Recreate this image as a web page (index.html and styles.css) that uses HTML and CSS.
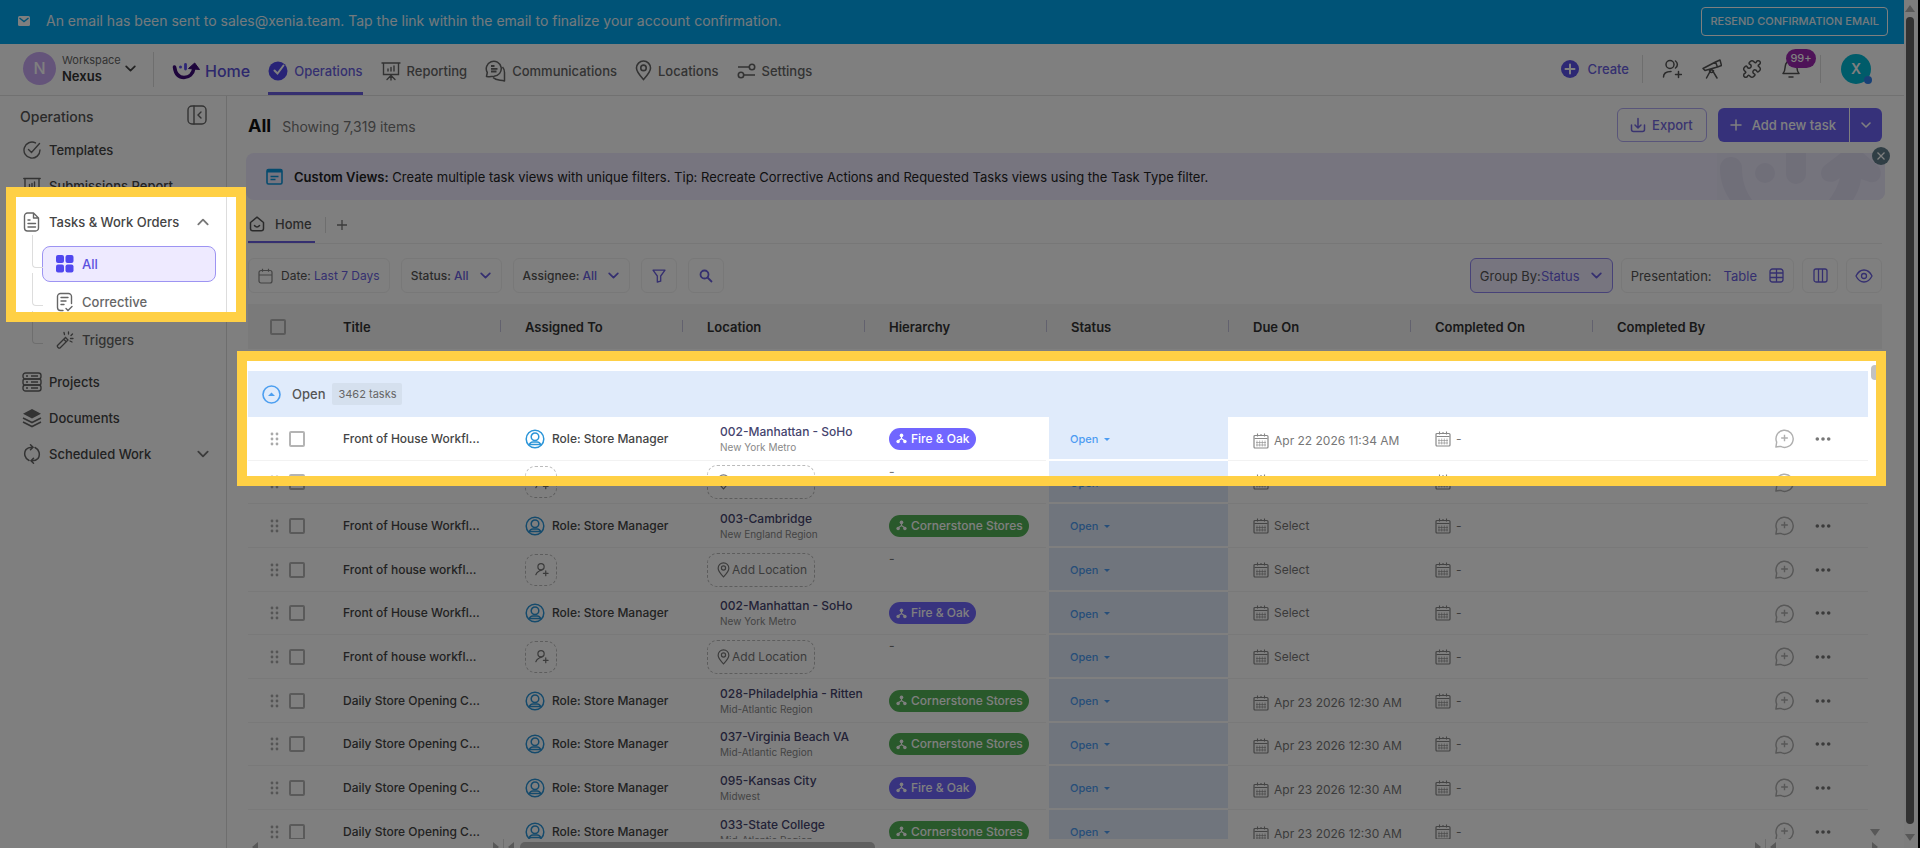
FILE: index.html
```html
<!DOCTYPE html>
<html lang="en">
<head>
<meta charset="utf-8">
<title>Operations - Tasks &amp; Work Orders</title>
<link rel="stylesheet" href="styles.css">
</head>
<body>
<svg class="defs" aria-hidden="true">
  <symbol id="chev" viewBox="0 0 12 12"><path d="M2 4l4 4 4-4" fill="none" stroke="currentColor" stroke-width="1.6" stroke-linecap="round" stroke-linejoin="round"/></symbol>
  <symbol id="drag" viewBox="0 0 10 16"><g fill="currentColor"><circle cx="2" cy="3" r="1.4"/><circle cx="7" cy="3" r="1.4"/><circle cx="2" cy="8" r="1.4"/><circle cx="7" cy="8" r="1.4"/><circle cx="2" cy="13" r="1.4"/><circle cx="7" cy="13" r="1.4"/></g></symbol>
  <symbol id="role" viewBox="0 0 20 20"><g fill="none" stroke="currentColor" stroke-width="1.5"><circle cx="10" cy="10" r="8.8"/><circle cx="10" cy="7.8" r="3.8"/><path d="M4.2 16c.6-2 2-3 3.6-3h4.4c1.6 0 3 1 3.6 3M4.6 15.6h10.8"/></g></symbol>
  <symbol id="adduser" viewBox="0 0 18 18"><g fill="none" stroke="currentColor" stroke-width="1.3" stroke-linecap="round"><circle cx="8.500" cy="6" r="3.300"/><path d="M10.500 8.500c-1 1.800-2.500 1-4 2.200-1.300 1-2.500 1.500-3.500 3.800M13.500 10.500v5M11 13h5"/></g></symbol>
  <symbol id="pin" viewBox="0 0 16 20"><g fill="none" stroke="currentColor" stroke-width="1.5"><path d="M8 18.6C4.4 14.600 1.300 11.400 1.300 7.700a6.700 6.700 0 0 1 13.400 0c0 3.700-3.100 6.900-6.700 10.900z"/><circle cx="8" cy="7.500" r="2.600"/></g></symbol>
  <symbol id="org" viewBox="0 0 12 12"><g fill="currentColor"><circle cx="6" cy="2.600" r="2"/><circle cx="2.300" cy="9.300" r="1.900"/><circle cx="9.700" cy="9.300" r="1.900"/><path d="M5.400 4h1.200v1.600l3 2-.8 1L6 6.700 3.200 8.600l-.8-1 3-2z"/></g></symbol>
  <symbol id="cal" viewBox="0 0 16 16"><g fill="none" stroke="currentColor"><rect x="1" y="2.500" width="14" height="12.500" rx="1" stroke-width="1.200"/><path d="M1.500 5.500h13M4.500.5v3M11.500.5v3M8 1v2" stroke-width="1.100"/><path d="M4 7.500v6M6.700 7.500v6M9.300 7.500v6M12 7.500v6M3 9.500h10M3 12h10" stroke-width=".6"/></g></symbol>
  <symbol id="chat" viewBox="0 0 22 22"><g fill="none" stroke="currentColor" stroke-width="1.500" stroke-linejoin="round"><path d="M2 20l.8-5.200A9 9 0 1 1 7 19.300c-1.600.2-3.200.3-5 .7z"/><path d="M11 7v7M7.500 10.500h7"/></g></symbol>
  <symbol id="dots" viewBox="0 0 16 6"><g fill="currentColor"><circle cx="2.300" cy="3" r="1.800"/><circle cx="8" cy="3" r="1.800"/><circle cx="13.700" cy="3" r="1.800"/></g></symbol>
  <symbol id="report" viewBox="0 0 20 20"><g fill="none" stroke="currentColor" stroke-width="1.400" stroke-linecap="round"><path d="M1 2h18M2.500 2v11.500h15V2M7 10V8M10 10V6.500M13 10V5M10 13.500V19M6 18.500l4-4 4 4"/></g></symbol>
</svg>

<div class="app">
  <div class="notice">
    <svg width="14" height="12" viewBox="0 0 14 12" aria-hidden="true"><rect x="1" y="1" width="12" height="10" rx="1.500" fill="#fff"/><path d="M2.500 3l4.500 3.500L11.500 3" fill="none" stroke="#00a7ee" stroke-width="1.400"/></svg>
    <p>An email has been sent to sales@xenia.team. Tap the link within the email to finalize your account confirmation.</p>
    <button class="resend">RESEND CONFIRMATION EMAIL</button>
  </div>

  <header class="top">
    <button class="workspace">
      <span class="ws-avatar">N</span>
      <span class="ws-text"><span>Workspace</span><b>Nexus</b></span>
      <svg width="13" height="13"><use href="#chev"/></svg>
    </button>
    <nav class="nav">
      <a class="home" href="#"><svg width="28" height="20" viewBox="0 0 28 20"><g fill="none" stroke="#3c0a78" stroke-width="3.600" stroke-linecap="round"><path d="M2.500 6c1 7.500 4.500 10.500 9.500 10.500s9-3.500 10-9.500"/></g><path d="M16.500 7.500l6.200-5.500L27.500 8.500z" fill="#3c0a78" stroke="#3c0a78" stroke-width="1" stroke-linejoin="round"/><circle cx="8.500" cy="6" r="1.500" fill="#5b4df0"/><path d="M13.500 3.500v4.500" stroke="#5b4df0" stroke-width="2.800" stroke-linecap="round"/></svg>Home</a>
      <a class="on" href="#"><svg width="20" height="20" viewBox="0 0 20 20"><circle cx="10" cy="10" r="9.500" fill="#5047ef"/><path d="M6.500 9.500l3 3 6-8" fill="none" stroke="#fff" stroke-width="2" stroke-linecap="round"/></svg>Operations</a>
      <a href="#"><svg width="20" height="20"><use href="#report"/></svg>Reporting</a>
      <a href="#"><svg width="21" height="22" viewBox="0 0 21 22"><g fill="none" stroke="currentColor" stroke-width="1.500" stroke-linejoin="round"><path d="M1.500 16.500l.8-4A7.500 7.500 0 1 1 9 16.200c-2.500 0-5 .8-7.500.3z"/><path d="M17.500 7c1.400 1.500 2 3.500 2 5.500v8.500c-4-1.500-8 0-11.500-3.500"/><path d="M6 6h3.500M6 8.800h6.500M6 11.500h5.500" stroke-width="1.800"/></g></svg>Communications</a>
      <a href="#"><svg width="17" height="21"><use href="#pin"/></svg>Locations</a>
      <a href="#"><svg width="19" height="16" viewBox="0 0 19 16"><g fill="none" stroke="currentColor" stroke-width="1.600"><path d="M1 4h11M7 12h11"/><circle cx="15" cy="4" r="2.700"/><circle cx="4" cy="12" r="2.700"/></g></svg>Settings</a>
    </nav>
    <div class="tools">
      <button class="create"><svg width="18" height="18" viewBox="0 0 18 18"><circle cx="9" cy="9" r="9" fill="#5b50e8"/><path d="M9 4.500v9M4.500 9h9" stroke="#fff" stroke-width="2" stroke-linecap="round"/></svg>Create</button>
      <span class="vline"></span>
      <button aria-label="Invite user"><svg width="20" height="20" viewBox="0 0 20 20"><g fill="none" stroke="currentColor" stroke-width="1.500" stroke-linecap="round"><circle cx="8" cy="5.500" r="4"/><path d="M13.500 2c2.500 2 2.500 5 0 7M1.500 18c0-3.500 2-5.500 7.500-5.500M16.500 12.500v6M13.500 15.500h6"/></g></svg></button>
      <button aria-label="Explore"><svg width="20" height="20" viewBox="0 0 20 20"><g fill="none" stroke="currentColor" stroke-width="1.500" stroke-linejoin="round" stroke-linecap="round"><path d="M1 9.500L13.500 3l2 5L3 11.500zM13.500 3L18 1l1.500 5.500-4 1.500M9.500 9.800L4.500 19M9.500 9.800L15 19M7.500 11.500a2 2 0 0 0 4 0"/></g></svg></button>
      <button aria-label="Integrations"><svg width="20" height="20" viewBox="0 0 24 24"><path d="M19.439 7.850c-.049.322.059.648.289.878l1.568 1.568c.47.470.706 1.087.706 1.704s-.235 1.233-.706 1.704l-1.611 1.611a.98.980 0 0 1-.837.276c-.470-.070-.802-.480-.968-.925a2.501 2.501 0 1 0-3.214 3.214c.446.166.855.497.925.968a.979.979 0 0 1-.276.837l-1.610 1.610a2.404 2.404 0 0 1-1.705.707 2.402 2.402 0 0 1-1.704-.706l-1.568-1.568a1.026 1.026 0 0 0-.877-.290c-.493.074-.840.504-1.020.968a2.500 2.500 0 1 1-3.237-3.237c.464-.180.894-.527.967-1.020a1.026 1.026 0 0 0-.289-.877l-1.568-1.568A2.402 2.402 0 0 1 1.998 12c0-.617.236-1.234.706-1.704L4.230 8.770c.240-.240.581-.353.917-.303.515.077.877.528 1.073 1.010a2.500 2.500 0 1 0 3.259-3.259c-.482-.196-.933-.558-1.010-1.073-.050-.336.062-.676.303-.917l1.525-1.525A2.402 2.402 0 0 1 12 1.998c.617 0 1.234.236 1.704.706l1.568 1.568c.230.230.556.338.877.290.493-.074.840-.504 1.020-.968a2.500 2.500 0 1 1 3.237 3.237c-.464.180-.894.527-.967 1.020Z" fill="none" stroke="currentColor" stroke-width="1.800" stroke-linejoin="round"/></svg></button>
      <button class="bell" aria-label="Notifications"><svg width="18" height="20" viewBox="0 0 18 20"><path d="M1 14.500c2-2 2-4 2.200-7C3.500 4 5.500 2 9 2s5.500 2 5.800 5.500c.2 3 .2 5 2.200 7zM7 18h4" fill="none" stroke="currentColor" stroke-width="1.500" stroke-linejoin="round" stroke-linecap="round"/></svg><span class="badge">99+</span></button>
      <span class="vline last"></span>
      <button class="me" aria-label="Account">X<span class="dot"></span></button>
    </div>
  </header>

  <div class="body">
    <aside class="side">
      <div class="side-head"><h2>Operations</h2><button aria-label="Collapse"><svg width="20" height="20" viewBox="0 0 20 20"><g fill="none" stroke="currentColor" stroke-width="1.400" stroke-linecap="round"><rect x="1" y="1" width="18" height="18" rx="4"/><path d="M7 1v18M14 7l-3 3 3 3"/></g></svg></button></div>
      <a href="#"><svg width="18" height="18" viewBox="0 0 18 18"><g fill="none" stroke="currentColor" stroke-width="1.400" stroke-linecap="round"><path d="M12.500 1.900A8 8 0 1 0 17 9M5.500 8.500l3 3 8-9"/></g></svg>Templates</a>
      <a href="#"><svg width="18" height="18" viewBox="0 0 18 18"><g fill="none" stroke="currentColor" stroke-width="1.400" stroke-linecap="round"><path d="M.8 1.500h16.400M2 1.500v11h14v-11M6.500 9.500v-2M9 9.500V6.500M11.500 9.500V5M9 12.500V17"/></g></svg>Submissions Report</a>
      <a href="#"><svg width="18" height="20" viewBox="0 0 18 20"><g fill="none" stroke="currentColor" stroke-width="1.400" stroke-linejoin="round" stroke-linecap="round"><path d="M10.500 1H4.500a3 3 0 0 0-3 3v12a3 3 0 0 0 3 3h8a3 3 0 0 0 3-3V6zM10.500 1v5h5M5 8h2M5 11.500h7.500M5 15h7.500"/></g></svg>Tasks &amp; Work Orders<svg class="end up" width="14" height="14"><use href="#chev"/></svg></a>
      <div class="tree">
        <a class="sel" href="#"><svg width="18" height="18" viewBox="0 0 18 18"><g fill="#5047ef"><rect x="0" y="0" width="8" height="8" rx="2"/><rect x="9.500" y="0" width="8" height="8" rx="2"/><rect x="0" y="9.500" width="8" height="8" rx="2"/><rect x="9.500" y="9.500" width="8" height="8" rx="2"/></g></svg>All</a>
        <a href="#"><svg width="18" height="20" viewBox="0 0 18 20"><g fill="none" stroke="currentColor" stroke-width="1.400" stroke-linecap="round"><path d="M7 18.500H4.500a3 3 0 0 1-3-3v-11a3 3 0 0 1 3-3h8a3 3 0 0 1 3 3v7M5 5.500h7M5 9h5M5 12.500h3M10 16.500l2 2 4-4"/></g></svg>Corrective</a>
        <a href="#"><svg width="18" height="18" viewBox="0 0 18 18"><g fill="none" stroke="currentColor" stroke-width="1.300" stroke-linecap="round"><path d="M1.500 14.500l8-8 2.500 2.500-8 8c-1 .8-3.300-1.500-2.500-2.500zM8 8.500l2.200 2.200M8.500 3.500L8 1.500M12.500 3V1M15 4.500l1.500-1.500M14.500 7.500h2.500M14 10l2 1"/></g></svg>Triggers</a>
      </div>
      <a href="#"><svg width="20" height="20" viewBox="0 0 20 20"><g fill="none" stroke="currentColor" stroke-width="1.400"><rect x="1" y="1" width="18" height="6" rx="2.500"/><rect x="1" y="7" width="18" height="6" rx="2"/><rect x="1" y="13" width="18" height="6" rx="2.500"/><path d="M4 4h2M9 4h7M4 10h2M9 10h7M4 16h2M9 16h7"/></g></svg>Projects</a>
      <a href="#"><svg width="20" height="20" viewBox="0 0 20 20"><path d="M10 1l9 4.700-9 4.700-9-4.700z" fill="currentColor"/><path d="M1 10l9 4.500L19 10M1 14l9 4.500 9-4.500" fill="none" stroke="currentColor" stroke-width="1.600"/></svg>Documents</a>
      <a href="#"><svg width="20" height="20" viewBox="0 0 20 20"><g fill="none" stroke="currentColor" stroke-width="1.500" stroke-linecap="round"><path d="M7 16.500A7.500 7.500 0 0 1 4 5.500C5.500 3.800 7.500 3 10.500 3.200M8.500.8l2.500 2.400-2.500 2.500M13 3.500a7.500 7.500 0 0 1 3 11c-1.500 1.700-3.500 2.400-6.500 2.300M11.500 14.300L9 16.800l2.500 2.400"/></g></svg>Scheduled Work<svg class="end" width="14" height="14"><use href="#chev"/></svg></a>
    </aside>

    <main class="main">
      <div class="head">
        <h1>All</h1><span class="count">Showing 7,319 items</span>
        <button class="export"><svg width="16" height="16" viewBox="0 0 16 16"><path d="M1.500 8v4.500a2 2 0 0 0 2 2h9a2 2 0 0 0 2-2V8M8 1.500v9M5 8l3 3 3-3" fill="none" stroke="currentColor" stroke-width="1.500" stroke-linecap="round" stroke-linejoin="round"/></svg>Export</button>
        <div class="split"><button class="add"><svg width="12" height="12" viewBox="0 0 12 12"><path d="M6 1v10M1 6h10" stroke="currentColor" stroke-width="1.500" stroke-linecap="round"/></svg>Add new task</button><button class="more" aria-label="More options"><svg width="12" height="12"><use href="#chev"/></svg></button></div>
      </div>

      <div class="tip">
        <svg width="17" height="17" viewBox="0 0 17 17" aria-hidden="true"><rect x="1" y="1.500" width="15" height="14.500" rx="1.500" fill="none" stroke="#0d96dc" stroke-width="1.600"/><path d="M1 3h15" stroke="#0d96dc" stroke-width="3"/><path d="M4.500 8.500h8M4.500 11.500h5" stroke="#0d96dc" stroke-width="1.500"/></svg>
        <p><b>Custom Views:</b> Create multiple task views with unique filters. Tip: Recreate Corrective Actions and Requested Tasks views using the Task Type filter.</p>
        <svg class="tip-art" width="168" height="47" viewBox="0 0 168 47" aria-hidden="true"><rect width="168" height="47" fill="#ebe8fa"/><g fill="#e0def3"><circle cx="48" cy="20" r="10"/><path d="M69 0h20v21a10 10 0 0 1-20 0zM3 15a11 11 0 0 1 22 0c0 12 3 22 10 32H13C7 38 3 28 3 15zM124 0h22l15 13c7 8 0 20-11 15l-6-2c-1 8-4 15-8 21h-24c5-7 9-14 11-22l-5 3c-12 4-18-7-11-15z"/></g></svg>
        <button class="close" aria-label="Dismiss"><svg width="10" height="10" viewBox="0 0 10 10"><path d="M1.500 1.500l7 7M8.500 1.500l-7 7" stroke="#fff" stroke-width="1.300"/></svg></button>
      </div>

      <div class="tabs">
        <a class="tab" href="#"><svg width="16" height="16" viewBox="0 0 16 16"><g fill="none" stroke="currentColor" stroke-width="1.500" stroke-linecap="round" stroke-linejoin="round"><path d="M1.500 6.500L8 1.200l6.500 5.300v6a2.300 2.300 0 0 1-2.300 2.300H3.800a2.300 2.300 0 0 1-2.300-2.300zM5.500 9.500c1.500 2 3.500 2 5 0"/></g></svg>Home</a>
        <span class="vline"></span>
        <button class="plus" aria-label="Add view"><svg width="12" height="12" viewBox="0 0 12 12"><path d="M6 1v10M1 6h10" stroke="currentColor" stroke-width="1.300"/></svg></button>
      </div>

      <div class="filters">
        <div class="set">
          <button class="day"><svg class="grey" width="15" height="16" viewBox="0 0 15 16"><path d="M3 2.500h9a2 2 0 0 1 2 2v8.500a2 2 0 0 1-2 2H3a2 2 0 0 1-2-2V4.500a2 2 0 0 1 2-2zM1 7h13M4.500.8v3M10.500.8v3" fill="none" stroke="currentColor" stroke-width="1.200"/></svg><span>Date: <em>Last 7 Days</em></span></button>
          <button><span>Status: <em>All</em></span><svg width="13" height="13"><use href="#chev"/></svg></button>
          <button><span>Assignee: <em>All</em></span><svg width="13" height="13"><use href="#chev"/></svg></button>
          <button class="icon" aria-label="Filter"><svg width="14" height="14" viewBox="0 0 14 14"><path d="M1 1.200h12L8.700 7v5.200L5.300 13V7z" fill="none" stroke="currentColor" stroke-width="1.300" stroke-linejoin="round"/></svg></button>
          <button class="icon" aria-label="Search"><svg width="14" height="14" viewBox="0 0 14 14"><g fill="none" stroke="currentColor" stroke-width="1.800"><circle cx="5.500" cy="5.500" r="4"/><path d="M8.500 8.500l4.500 4.500"/></g></svg></button>
        </div>
        <div class="set view">
          <button class="group"><span>Group By:<em>Status</em></span><svg width="13" height="13"><use href="#chev"/></svg></button>
          <button class="pres"><span>Presentation:</span><em>Table</em><svg width="15" height="15" viewBox="0 0 15 15"><path d="M3.500 1h8A2.500 2.500 0 0 1 14 3.500v8a2.500 2.500 0 0 1-2.500 2.500h-8A2.500 2.500 0 0 1 1 11.500v-8A2.500 2.500 0 0 1 3.500 1zM1 5h13M1 9.500h13M7.500 1v13" fill="none" stroke="currentColor" stroke-width="1.300"/></svg></button>
          <button class="icon" aria-label="Columns"><svg width="15" height="15" viewBox="0 0 15 15"><path d="M3 1h9a2 2 0 0 1 2 2v9a2 2 0 0 1-2 2H3a2 2 0 0 1-2-2V3a2 2 0 0 1 2-2zM5.500 1v13M9.500 1v13" fill="none" stroke="currentColor" stroke-width="1.300"/></svg></button>
          <button class="icon" aria-label="Visibility"><svg width="18" height="14" viewBox="0 0 18 14"><path d="M1 7c4-8 12-8 16 0-4 8-12 8-16 0z" fill="none" stroke="currentColor" stroke-width="1.300"/><circle cx="9" cy="7" r="2.500" fill="none" stroke="currentColor" stroke-width="1.300"/></svg></button>
        </div>
      </div>

      <div class="scroll">
      <table>
        <colgroup><col class="c-pick"><col class="c"><col class="c"><col class="c"><col class="c"><col class="c"><col class="c"><col class="c"><col><col class="c-act"><col class="c-gut"></colgroup>
        <thead><tr><th class="pick"><input type="checkbox" aria-label="Select all"></th><th>Title</th><th>Assigned To</th><th>Location</th><th>Hierarchy</th><th>Status</th><th>Due On</th><th>Completed On</th><th>Completed By</th><th></th><th></th></tr></thead>
        <tbody>
          <tr class="open-group"><td colspan="10"><div class="grp"><button aria-label="Collapse group"><svg width="19" height="19" viewBox="0 0 19 19"><circle cx="9.500" cy="9.500" r="8.500" fill="none" stroke="#4d9ff0" stroke-width="1.600"/><path d="M6 11l3.500-3.500L13 11z" fill="#4d9ff0"/></svg></button>Open<span class="tag">3462 tasks</span></div></td><td></td></tr>
        </tbody>
        <tbody class="rows">
          <tr><td class="pick"><svg width="10" height="16"><use href="#drag"/></svg><input type="checkbox" aria-label="Select task"></td><td>Front of House Workfl…</td><td><span class="who"><svg width="20" height="20"><use href="#role"/></svg>Role: Store Manager</span></td><td><div class="loc">002-Manhattan - SoHo<small>New York Metro</small></div></td><td><span class="pill"><svg width="11" height="11"><use href="#org"/></svg>Fire &amp; Oak</span></td><td class="st"><button>Open</button></td><td><span class="date time"><svg width="16" height="16"><use href="#cal"/></svg>Apr 22 2026 11:34 AM</span></td><td><span class="date"><svg width="16" height="16"><use href="#cal"/></svg>-</span></td><td></td><td class="act"><button aria-label="Comment"><svg width="21" height="21"><use href="#chat"/></svg></button><button class="dots" aria-label="More"><svg width="16" height="6"><use href="#dots"/></svg></button></td><td></td></tr>
          <tr><td class="pick"><svg width="10" height="16"><use href="#drag"/></svg><input type="checkbox" aria-label="Select task"></td><td>Front of house workfl…</td><td><button class="dash sq" aria-label="Assign"><svg width="17" height="17"><use href="#adduser"/></svg></button></td><td><button class="dash"><svg width="13" height="16"><use href="#pin"/></svg>Add Location</button></td><td class="none">-</td><td class="st"><button>Open</button></td><td><span class="date"><svg width="16" height="16"><use href="#cal"/></svg>Select</span></td><td><span class="date"><svg width="16" height="16"><use href="#cal"/></svg>-</span></td><td></td><td class="act"><button aria-label="Comment"><svg width="21" height="21"><use href="#chat"/></svg></button><button class="dots" aria-label="More"><svg width="16" height="6"><use href="#dots"/></svg></button></td><td></td></tr>
          <tr><td class="pick"><svg width="10" height="16"><use href="#drag"/></svg><input type="checkbox" aria-label="Select task"></td><td>Front of House Workfl…</td><td><span class="who"><svg width="20" height="20"><use href="#role"/></svg>Role: Store Manager</span></td><td><div class="loc">003-Cambridge<small>New England Region</small></div></td><td><span class="pill green"><svg width="11" height="11"><use href="#org"/></svg>Cornerstone Stores</span></td><td class="st"><button>Open</button></td><td><span class="date"><svg width="16" height="16"><use href="#cal"/></svg>Select</span></td><td><span class="date"><svg width="16" height="16"><use href="#cal"/></svg>-</span></td><td></td><td class="act"><button aria-label="Comment"><svg width="21" height="21"><use href="#chat"/></svg></button><button class="dots" aria-label="More"><svg width="16" height="6"><use href="#dots"/></svg></button></td><td></td></tr>
          <tr><td class="pick"><svg width="10" height="16"><use href="#drag"/></svg><input type="checkbox" aria-label="Select task"></td><td>Front of house workfl…</td><td><button class="dash sq" aria-label="Assign"><svg width="17" height="17"><use href="#adduser"/></svg></button></td><td><button class="dash"><svg width="13" height="16"><use href="#pin"/></svg>Add Location</button></td><td class="none">-</td><td class="st"><button>Open</button></td><td><span class="date"><svg width="16" height="16"><use href="#cal"/></svg>Select</span></td><td><span class="date"><svg width="16" height="16"><use href="#cal"/></svg>-</span></td><td></td><td class="act"><button aria-label="Comment"><svg width="21" height="21"><use href="#chat"/></svg></button><button class="dots" aria-label="More"><svg width="16" height="6"><use href="#dots"/></svg></button></td><td></td></tr>
          <tr><td class="pick"><svg width="10" height="16"><use href="#drag"/></svg><input type="checkbox" aria-label="Select task"></td><td>Front of House Workfl…</td><td><span class="who"><svg width="20" height="20"><use href="#role"/></svg>Role: Store Manager</span></td><td><div class="loc">002-Manhattan - SoHo<small>New York Metro</small></div></td><td><span class="pill"><svg width="11" height="11"><use href="#org"/></svg>Fire &amp; Oak</span></td><td class="st"><button>Open</button></td><td><span class="date"><svg width="16" height="16"><use href="#cal"/></svg>Select</span></td><td><span class="date"><svg width="16" height="16"><use href="#cal"/></svg>-</span></td><td></td><td class="act"><button aria-label="Comment"><svg width="21" height="21"><use href="#chat"/></svg></button><button class="dots" aria-label="More"><svg width="16" height="6"><use href="#dots"/></svg></button></td><td></td></tr>
          <tr><td class="pick"><svg width="10" height="16"><use href="#drag"/></svg><input type="checkbox" aria-label="Select task"></td><td>Front of house workfl…</td><td><button class="dash sq" aria-label="Assign"><svg width="17" height="17"><use href="#adduser"/></svg></button></td><td><button class="dash"><svg width="13" height="16"><use href="#pin"/></svg>Add Location</button></td><td class="none">-</td><td class="st"><button>Open</button></td><td><span class="date"><svg width="16" height="16"><use href="#cal"/></svg>Select</span></td><td><span class="date"><svg width="16" height="16"><use href="#cal"/></svg>-</span></td><td></td><td class="act"><button aria-label="Comment"><svg width="21" height="21"><use href="#chat"/></svg></button><button class="dots" aria-label="More"><svg width="16" height="6"><use href="#dots"/></svg></button></td><td></td></tr>
          <tr><td class="pick"><svg width="10" height="16"><use href="#drag"/></svg><input type="checkbox" aria-label="Select task"></td><td>Daily Store Opening C…</td><td><span class="who"><svg width="20" height="20"><use href="#role"/></svg>Role: Store Manager</span></td><td><div class="loc">028-Philadelphia - Ritten<small>Mid-Atlantic Region</small></div></td><td><span class="pill green"><svg width="11" height="11"><use href="#org"/></svg>Cornerstone Stores</span></td><td class="st"><button>Open</button></td><td><span class="date time"><svg width="16" height="16"><use href="#cal"/></svg>Apr 23 2026 12:30 AM</span></td><td><span class="date"><svg width="16" height="16"><use href="#cal"/></svg>-</span></td><td></td><td class="act"><button aria-label="Comment"><svg width="21" height="21"><use href="#chat"/></svg></button><button class="dots" aria-label="More"><svg width="16" height="6"><use href="#dots"/></svg></button></td><td></td></tr>
          <tr><td class="pick"><svg width="10" height="16"><use href="#drag"/></svg><input type="checkbox" aria-label="Select task"></td><td>Daily Store Opening C…</td><td><span class="who"><svg width="20" height="20"><use href="#role"/></svg>Role: Store Manager</span></td><td><div class="loc">037-Virginia Beach VA<small>Mid-Atlantic Region</small></div></td><td><span class="pill green"><svg width="11" height="11"><use href="#org"/></svg>Cornerstone Stores</span></td><td class="st"><button>Open</button></td><td><span class="date time"><svg width="16" height="16"><use href="#cal"/></svg>Apr 23 2026 12:30 AM</span></td><td><span class="date"><svg width="16" height="16"><use href="#cal"/></svg>-</span></td><td></td><td class="act"><button aria-label="Comment"><svg width="21" height="21"><use href="#chat"/></svg></button><button class="dots" aria-label="More"><svg width="16" height="6"><use href="#dots"/></svg></button></td><td></td></tr>
          <tr><td class="pick"><svg width="10" height="16"><use href="#drag"/></svg><input type="checkbox" aria-label="Select task"></td><td>Daily Store Opening C…</td><td><span class="who"><svg width="20" height="20"><use href="#role"/></svg>Role: Store Manager</span></td><td><div class="loc">095-Kansas City<small>Midwest</small></div></td><td><span class="pill"><svg width="11" height="11"><use href="#org"/></svg>Fire &amp; Oak</span></td><td class="st"><button>Open</button></td><td><span class="date time"><svg width="16" height="16"><use href="#cal"/></svg>Apr 23 2026 12:30 AM</span></td><td><span class="date"><svg width="16" height="16"><use href="#cal"/></svg>-</span></td><td></td><td class="act"><button aria-label="Comment"><svg width="21" height="21"><use href="#chat"/></svg></button><button class="dots" aria-label="More"><svg width="16" height="6"><use href="#dots"/></svg></button></td><td></td></tr>
          <tr><td class="pick"><svg width="10" height="16"><use href="#drag"/></svg><input type="checkbox" aria-label="Select task"></td><td>Daily Store Opening C…</td><td><span class="who"><svg width="20" height="20"><use href="#role"/></svg>Role: Store Manager</span></td><td><div class="loc">033-State College<small>Mid-Atlantic Region</small></div></td><td><span class="pill green"><svg width="11" height="11"><use href="#org"/></svg>Cornerstone Stores</span></td><td class="st"><button>Open</button></td><td><span class="date time"><svg width="16" height="16"><use href="#cal"/></svg>Apr 23 2026 12:30 AM</span></td><td><span class="date"><svg width="16" height="16"><use href="#cal"/></svg>-</span></td><td></td><td class="act"><button aria-label="Comment"><svg width="21" height="21"><use href="#chat"/></svg></button><button class="dots" aria-label="More"><svg width="16" height="6"><use href="#dots"/></svg></button></td><td></td></tr>
        </tbody>
      </table>
      <span class="v-thumb"></span><span class="arr down v-down"></span>
      </div>
      <div class="hbars" aria-hidden="true">
        <div class="hbar left"><span class="arr lt"></span><span class="arr rt"></span></div>
        <div class="hbar mid"><span class="arr lt"></span><span class="h-thumb"></span><span class="arr rt"></span></div>
        <div class="hbar right"><span class="arr lt"></span><span class="arr rt"></span></div>
      </div>
    </main>
  </div>
</div>
<div class="page-bar" aria-hidden="true"><span class="arr upw"></span><span class="p-thumb"></span><span class="arr down"></span></div>

<div class="dim"></div>
<div class="mark mark-side"></div>
<div class="mark mark-rows"></div>
</body>
</html>
```
FILE: styles.css
```css
* { box-sizing: border-box; }
html, body { height: 100%; margin: 0; overflow: hidden; }
body { display: flex; position: relative; background: #fff; color: #444; font: 500 13px/16px Inter, "Open Sans", sans-serif; }
.defs { position: absolute; width: 0; height: 0; }
svg { display: block; flex: none; }
button { font: inherit; color: inherit; background: none; border: 0; padding: 0; margin: 0; display: flex; align-items: center; white-space: nowrap; cursor: pointer; }
a { color: inherit; text-decoration: none; }
p, h1, h2 { margin: 0; }
em { font-style: normal; color: #6a5fe0; }
.app { flex: 1; min-width: 0; display: flex; flex-direction: column; height: 100%; }
.vline { width: 1px; height: 28px; background: #ddd; }

/* account notice */
.notice { display: flex; align-items: center; height: 44px; flex: none; background: #00a6ee; color: #e8f4fa; padding: 0 16px 2px 17px; gap: 15px; font-size: 14px; font-weight: 400; }
.resend { margin-left: auto; height: 29px; padding: 0 8px; border: 1px solid #fff; border-radius: 4px; font-size: 11px; font-weight: 500; }

/* top bar */
.top { display: flex; align-items: stretch; height: 52px; flex: none; border-bottom: 1px solid #e2e2e2; }
.workspace { width: 154px; padding: 0 0 3px 23px; gap: 6px; position: relative; }
.workspace::after { content: ""; position: absolute; right: 0; top: 8px; bottom: 8px; width: 1px; background: #ddd; }
.ws-avatar { width: 33px; height: 33px; border-radius: 50%; background: #c9a9f5; color: #fff; font-size: 16px; line-height: 33px; text-align: center; }
.ws-text { display: flex; flex-direction: column; width: 56px; text-align: left; font-size: 11px; font-weight: 400; color: #666; }
.ws-text b { font-size: 13px; font-weight: 600; color: #333; }
.nav { display: flex; padding-left: 18px; gap: 18px; color: #666; }
.nav a { display: flex; align-items: center; gap: 6px; padding-top: 5px; border-bottom: 3px solid transparent; }
.nav .home { font-size: 16px; gap: 5px; color: #5b50d8; }
.nav .on { color: #6a5fe0; border-color: #6a5fe0; }
.tools { margin-left: auto; display: flex; align-items: center; gap: 20px; padding: 0 33px 2px 0; color: #555; }
.tools .vline { margin: 0 -1px 0 -7px; }
.tools .last { margin: 0; }
.tools .create { gap: 9px; color: #6a5fe0; }
.bell { position: relative; }
.badge { position: absolute; left: 4px; top: -10px; width: 30px; height: 19px; border-radius: 10px; background: #9c27b0; color: #fff; font-size: 11px; line-height: 19px; text-align: center; }
.me { position: relative; width: 30px; height: 30px; border-radius: 50%; background: #00b8d4; color: #fff; justify-content: center; font-size: 14px; font-weight: 600; }
.dot { position: absolute; right: -1px; bottom: 0; width: 8px; height: 8px; border-radius: 50%; background: #2f80ed; }

/* side navigation */
.body { flex: 1; min-height: 0; display: flex; }
.side { width: 227px; flex: none; border-right: 1px solid #ddd; padding: 6px 0 0; color: #444; }
.side-head { display: flex; align-items: center; justify-content: space-between; height: 30px; padding: 0 19px 0 20px; color: #666; }
.side-head h2 { font-size: 14px; font-weight: 500; line-height: 18px; color: #555; }
.side-head button { align-self: flex-start; margin-top: 3px; }
.side a { display: flex; align-items: center; height: 36px; padding: 0 16px 0 22px; }
.side a > svg:first-child { width: 20px; margin-right: 7px; color: #666; }
.side .end { margin-left: auto; color: #777; }
.up { transform: rotate(180deg); }
.side .tree { display: flex; flex-direction: column; gap: 2px; padding: 6px 10px 6px 32px; }
.side .tree a { position: relative; margin-left: 10px; padding: 0 12px; border: 1px solid transparent; border-radius: 8px; color: #666; }
.side .tree a::before { content: ""; position: absolute; left: -11px; top: -12px; width: 10px; height: 32px; border: solid #ddd; border-width: 0 0 1px 1px; border-radius: 0 0 0 4px; }
.side .tree .sel { background: #eeeaff; border-color: #9d94f2; color: #5b50e0; }

/* page head */
.main { flex: 1; min-width: 0; display: flex; flex-direction: column; padding: 12px 22px 0 21px; }
.head { display: flex; align-items: center; height: 34px; flex: none; }
.head h1 { padding-top: 2px; font-size: 18px; line-height: 24px; font-weight: 700; color: #111; }
.count { margin-left: 11px; padding-top: 4px; font-size: 14px; font-weight: 400; color: #777; }
.export { margin-left: auto; height: 34px; padding: 0 13px 0 12px; gap: 6px; border: 1px solid #b3abf5; border-radius: 6px; color: #7468e0; }
.split { display: flex; margin-left: 11px; border-radius: 6px; overflow: hidden; color: #fff; background: #6d63f5; }
.split button { height: 34px; }
.split .add { padding: 0 13px 0 12px; gap: 10px; border-right: 1px solid #fff; }
.split .more { padding: 0 10px; }
.tip { position: relative; display: flex; align-items: center; gap: 11px; height: 47px; flex: none; margin: 11px -3px 0 -2px; padding-left: 20px; background: #eeeaff; border-radius: 8px; font-size: 13px; font-weight: 400; color: #222; }
.tip b { font-weight: 600; }
.tip-art { margin-left: auto; border-radius: 0 8px 8px 0; }
.close { position: absolute; right: -5px; top: -6px; width: 18px; height: 18px; border-radius: 50%; background: #607d8b; justify-content: center; }
.tabs { display: flex; align-items: center; height: 44px; flex: none; border-bottom: 1px solid #eee; gap: 10px; }
.tab { display: flex; align-items: center; align-self: stretch; gap: 10px; padding: 6px 3px 0 1px; border-bottom: 2px solid #6a5fe0; color: #555; }
.tabs .vline { height: 16px; margin-top: 6px; }
.plus { color: #777; margin-top: 6px; }

/* filters */
.filters { display: flex; justify-content: space-between; padding: 14px 0 11px; flex: none; }
.set { display: flex; gap: 11px; font-size: 12px; }
.set.view { gap: 8px; font-size: 13px; font-weight: 400; }
.filters button { height: 35px; padding: 0 9px; gap: 10px; border: 1px solid #f0f0f0; border-radius: 6px; color: #6a5fe0; }
.filters button > span { color: #555; }
.filters .day { gap: 8px; font-weight: 400; }
.filters .icon { width: 36px; padding: 0; justify-content: center; }
.filters .grey { color: #888; }
.filters .group { background: #eeeaff; border-color: #8f85f0; }
.filters .pres em { padding: 0 2px; }

/* task table */
.scroll { position: relative; flex: 1; min-height: 0; overflow: hidden; }
table { width: 100%; table-layout: fixed; border-collapse: separate; border-spacing: 0; font-size: 12px; }
.c-pick { width: 70px; }
.c { width: 182px; }
.c-act { width: 94px; }
.c-gut { width: 14px; }
th { position: relative; height: 45px; padding: 0 0 0 25px; text-align: left; font-size: 13px; font-weight: 600; color: #333; background: #f4f4f4; }
th:nth-child(n+3):nth-child(-n+9)::before { content: ""; position: absolute; left: 0; top: 16px; width: 1px; height: 12px; background: #c4c2dc; }
thead::after { content: ""; display: table-row; height: 22px; }
input[type="checkbox"] { appearance: none; width: 16px; height: 16px; margin: 0; border: 2px solid #b4b4b4; border-radius: 2px; background: #fff; flex: none; }
th.pick { padding-left: 22px; }
th.pick input { display: block; background: none; }
.open-group td { padding: 0; height: 46px; }
.grp { display: flex; align-items: center; height: 46px; padding-left: 14px; gap: 11px; background: #e0ebfb; font-size: 13px; color: #555; }
.tag { padding: 3px 6px; margin-left: -4px; background: #d5e0ee; border-radius: 2px; font-size: 11px; font-weight: 400; color: #666; }
.rows td { height: 44px; padding: 0 0 0 25px; border-bottom: 1px solid #f2f2f2; white-space: nowrap; overflow: hidden; }
.rows tr:nth-child(3n+2) td { height: 43px; }
.rows td:last-child { border: 0; }
.rows td.pick { padding-left: 22px; }
.pick svg, .pick input { display: inline-block; vertical-align: middle; }
.pick svg { margin-right: 9px; color: #aaa; }
.who { display: flex; align-items: center; gap: 7px; }
.who svg { color: #2b95d8; }
.loc { margin-left: 13px; line-height: 16px; color: #45446e; }
.loc small { display: block; font-size: 10px; line-height: 14px; color: #888; font-weight: 400; }
.dash { height: 34px; padding: 0 7px 0 9px; gap: 2px; border: 1px dashed #bbb; border-radius: 10px; color: #777; font-weight: 400; }
.dash.sq { width: 32px; height: 32px; padding: 0; justify-content: center; }
.pill { display: inline-flex; align-items: center; gap: 4px; height: 22px; padding: 0 6px 0 7px; border-radius: 11px; background: #7166ff; color: #fff; vertical-align: middle; }
.pill.green { background: #52b256; }
.rows .none { padding-top: 3px; vertical-align: top; color: #777; }
.rows .st { padding-left: 21px; border-left: 3px solid #fff; background: #e0ebfb; border-bottom: 2px solid #fff; background-clip: padding-box; }
.st button { gap: 6px; padding-top: 2px; font-size: 11px; color: #4d9cf2; }
.st button::after { content: ""; border: 3px solid transparent; border-top-color: currentColor; border-bottom: 0; }
.date { display: flex; align-items: center; gap: 5px; color: #777; font-weight: 400; }
.time { padding-top: 4px; }
.date svg { color: #888; }
.rows .act { padding: 0; }
.act button { display: inline-flex; vertical-align: middle; color: #b0b0b0; }
.act .dots { margin-left: 20px; color: #777; }

/* scrollbars */
.arr { width: 0; height: 0; border: 5px solid transparent; flex: none; }
.lt { border-left: 0; border-right: 6px solid #b0b0b0; }
.rt { border-right: 0; border-left: 6px solid #b0b0b0; }
.down { border-bottom: 0; border-top: 7px solid #b0b0b0; }
.upw { border-top: 0; border-bottom: 7px solid #b0b0b0; }
.v-thumb { position: absolute; right: 3px; top: 61px; width: 8px; height: 15px; border-radius: 4px; background: #c1c1c1; }
.v-down { position: absolute; right: 2px; bottom: 3px; }
.hbars { display: flex; height: 9px; flex: none; overflow: hidden; }
.hbar { display: flex; align-items: flex-start; justify-content: space-between; padding: 3px 4px 0; height: 14px; }
.hbar.left { width: 255px; }
.hbar.mid { flex: 1; border: solid #ddd; border-width: 0 1px; }
.hbar.right { width: 116px; }
.h-thumb { width: 355px; height: 10px; margin: 0 auto 0 6px; border-radius: 5px; background: #c1c1c1; }
.page-bar { width: 16px; flex: none; display: flex; flex-direction: column; align-items: center; padding: 5px 3px 2px 1px; gap: 5px; background: #fafafa; border-right: 2px solid #000; }
.p-thumb { flex: 1; width: 8px; border-radius: 4px; background: #646464; }
.page-bar .down { margin: 5px 0; }

/* spotlight */
.dim { position: absolute; inset: 0; background: rgba(0, 0, 0, .5); pointer-events: none;
  clip-path: polygon(evenodd, 0 0, 100% 0, 100% 100%, 0 100%, 0 0, 16px 197px, 236px 197px, 236px 312px, 16px 312px, 16px 197px, 0 0, 247px 361px, calc(100% - 44px) 361px, calc(100% - 44px) 476px, 247px 476px, 247px 361px, 0 0); }
.mark { position: absolute; border: 10px solid #ffd045; pointer-events: none; }
.mark-side { left: 6px; top: 187px; width: 240px; height: 135px; }
.mark-rows { left: 237px; right: 34px; top: 351px; height: 135px; }
```
